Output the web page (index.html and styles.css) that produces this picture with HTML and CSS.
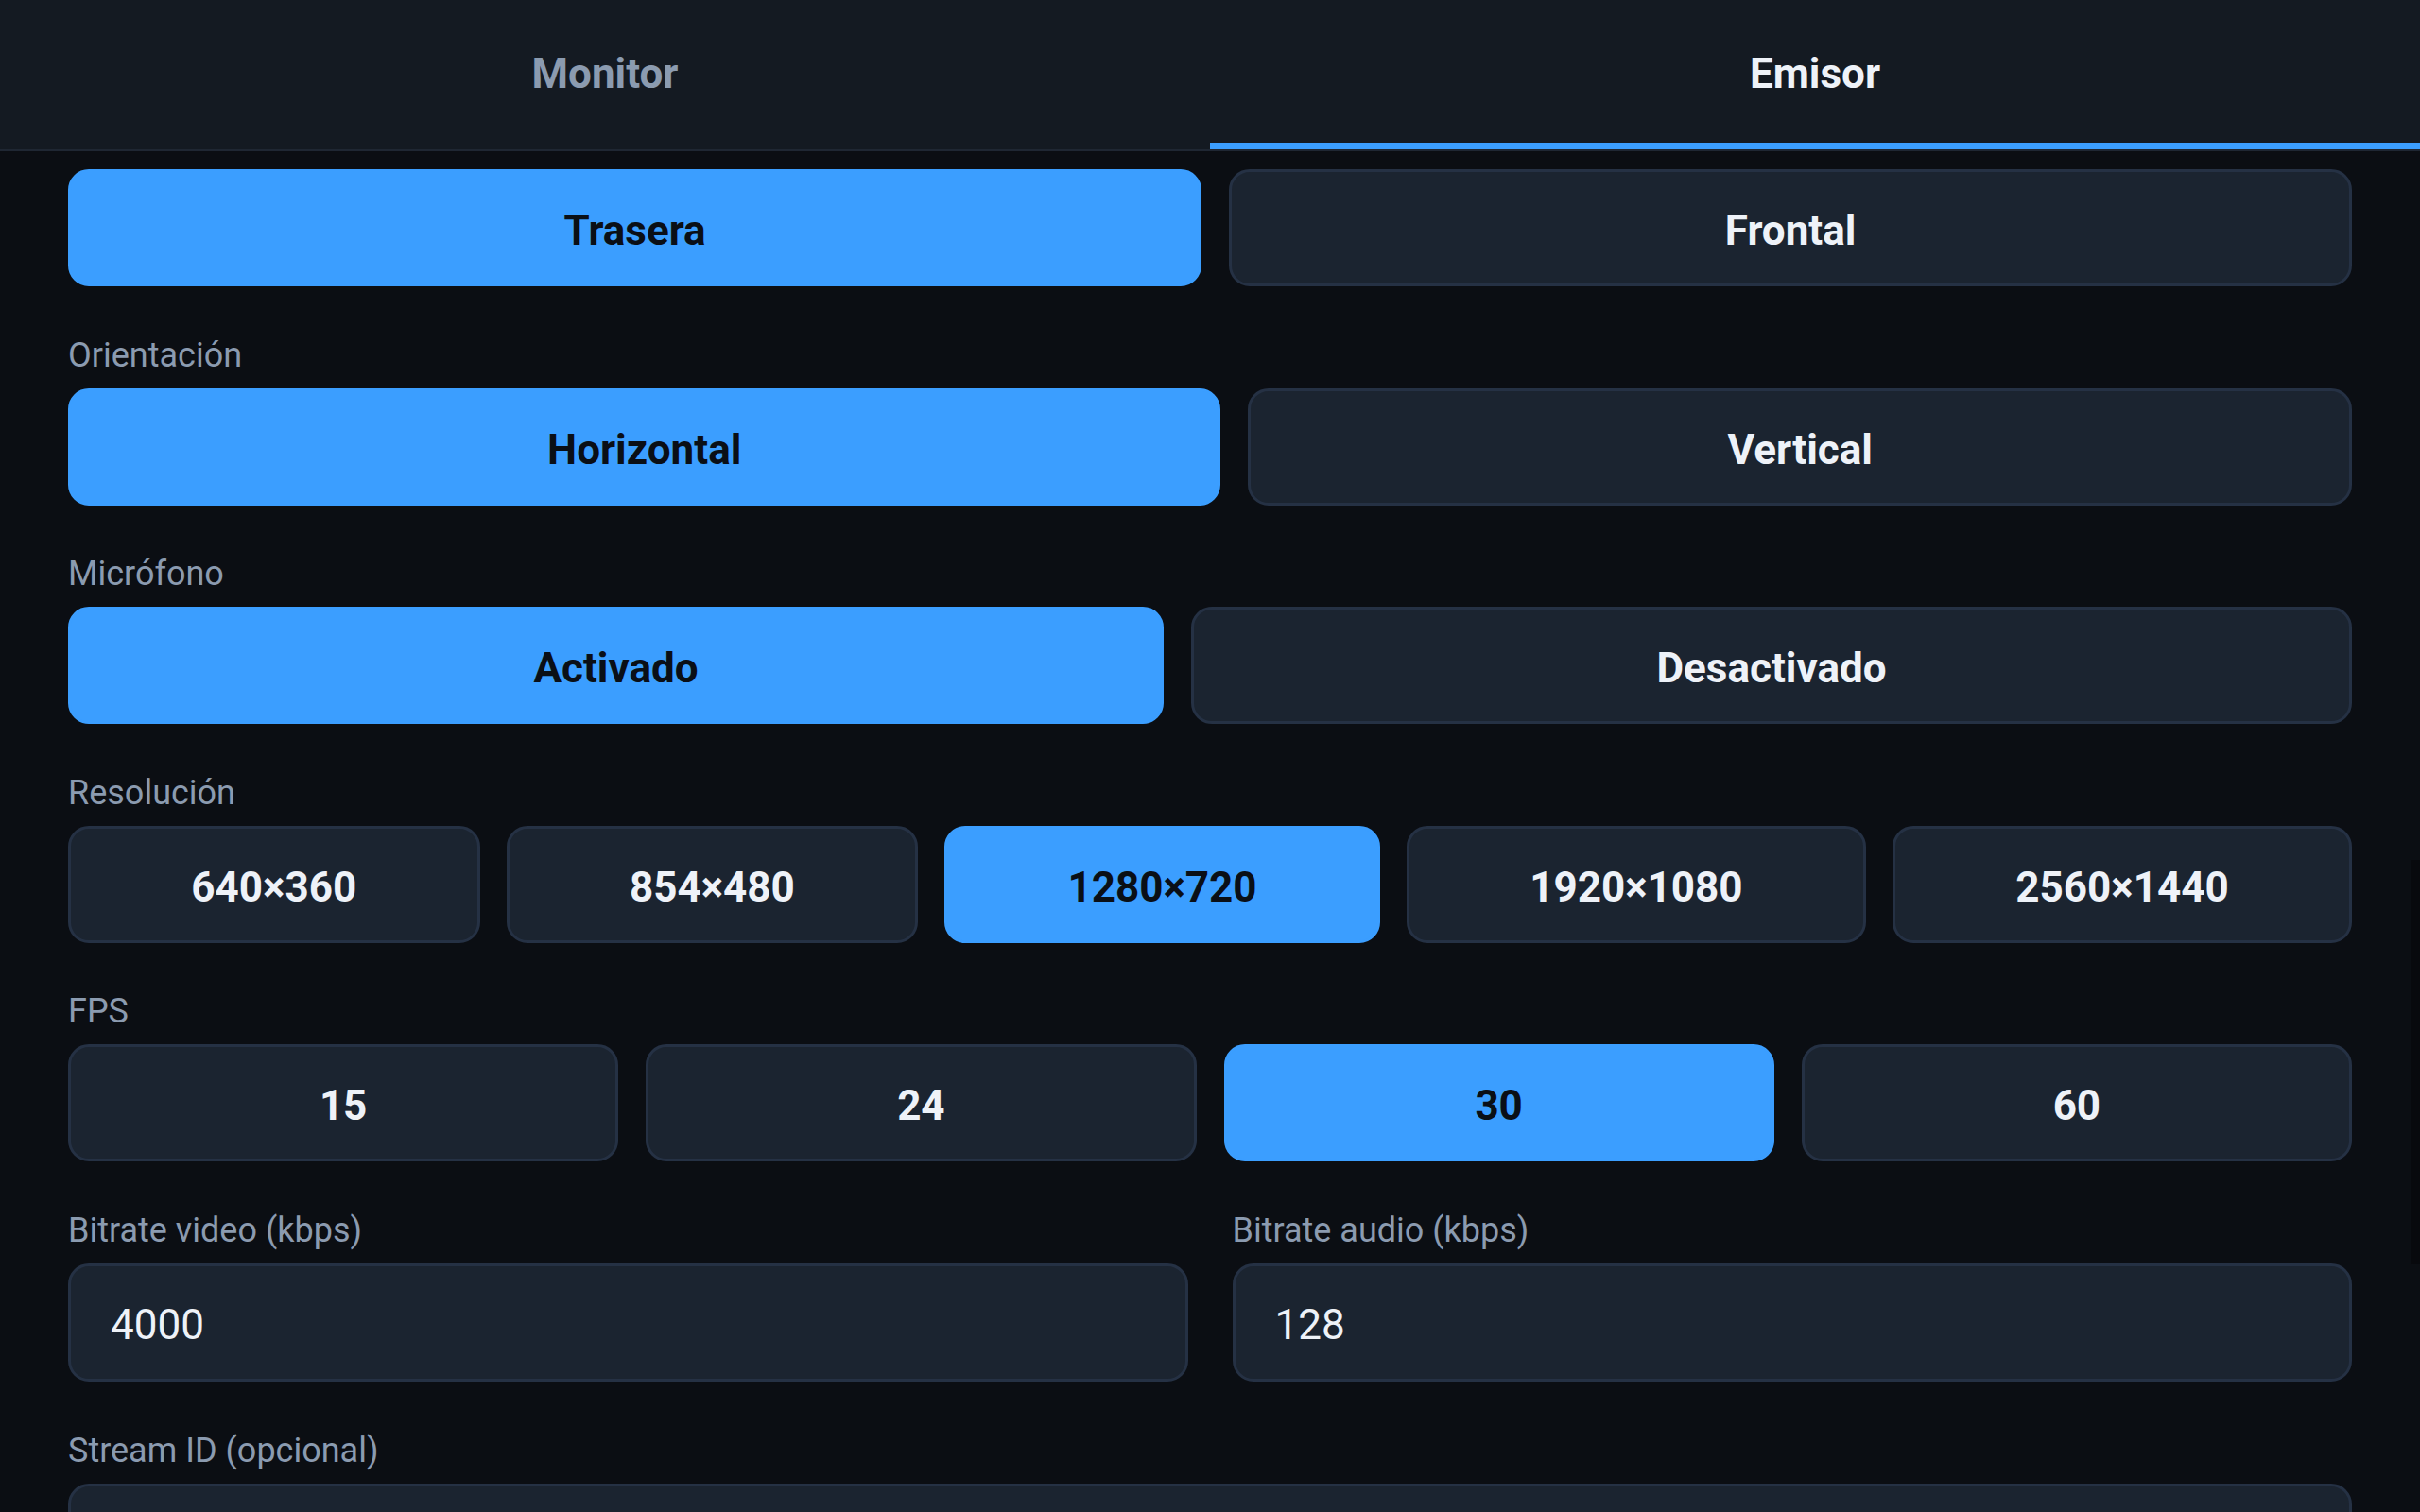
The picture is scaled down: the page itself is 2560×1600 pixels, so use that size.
FILE: index.html
```html
<!DOCTYPE html>
<html lang="es">
<head>
<meta charset="utf-8">
<title>Emisor</title>
<link rel="stylesheet" href="styles.css">
</head>
<body>
<div class="app">
  <nav class="tabs">
    <div class="tab">Monitor</div>
    <div class="tab tab-active">Emisor</div>
  </nav>
  <main class="content">
    <div class="seg">
      <button class="opt opt-on">Trasera</button>
      <button class="opt">Frontal</button>
    </div>

    <section class="field">
      <div class="label">Orientación</div>
      <div class="seg">
        <button class="opt opt-on">Horizontal</button>
        <button class="opt">Vertical</button>
      </div>
    </section>

    <section class="field">
      <div class="label">Micrófono</div>
      <div class="seg">
        <button class="opt opt-on">Activado</button>
        <button class="opt">Desactivado</button>
      </div>
    </section>

    <section class="field">
      <div class="label">Resolución</div>
      <div class="seg seg-tight">
        <button class="opt">640×360</button>
        <button class="opt">854×480</button>
        <button class="opt opt-on">1280×720</button>
        <button class="opt">1920×1080</button>
        <button class="opt">2560×1440</button>
      </div>
    </section>

    <section class="field">
      <div class="label">FPS</div>
      <div class="seg">
        <button class="opt">15</button>
        <button class="opt">24</button>
        <button class="opt opt-on">30</button>
        <button class="opt">60</button>
      </div>
    </section>

    <div class="pair">
      <section class="field">
        <div class="label">Bitrate video (kbps)</div>
        <input class="input" type="text" value="4000">
      </section>
      <section class="field">
        <div class="label">Bitrate audio (kbps)</div>
        <input class="input" type="text" value="128">
      </section>
    </div>

    <section class="field">
      <div class="label">Stream ID (opcional)</div>
      <input class="input" type="text" value="">
    </section>

    <div class="scroll-thumb"></div>
  </main>
</div>
</body>
</html>
```

FILE: styles.css
```css
* {
  box-sizing: border-box;
}

html, body {
  margin: 0;
  padding: 0;
  background: #0b0e13;
}

body {
  font-family: Roboto, "Noto Sans", "Liberation Sans", sans-serif;
  color: #eef2f8;
}

.app {
  width: 2560px;
  height: 1600px;
  display: flex;
  flex-direction: column;
  overflow: hidden;
}

/* top tab bar */
.tabs {
  flex: 0 0 auto;
  display: flex;
  height: 160px;
  background: #141a22;
  border-bottom: 2px solid #1f2733;
}

.tab {
  position: relative;
  flex: 1 1 0;
  display: flex;
  align-items: center;
  justify-content: center;
  padding-bottom: 3px;
  font-size: 44px;
  font-weight: 700;
  color: #8b9bb0;
}

.tab-active {
  color: #eef2f8;
}

.tab-active::after {
  content: "";
  position: absolute;
  left: 0;
  right: 0;
  bottom: 0;
  height: 7px;
  background: #3b9eff;
}

/* scrolling settings panel */
.content {
  position: relative;
  flex: 1 1 auto;
  overflow: hidden;
  padding: 19px 72px 0;
}

.field {
  margin-top: 50.6px;
}

.label {
  font-size: 36px;
  line-height: 41px;
  padding-top: 2px;
  color: #8b9bb0;
  margin-bottom: 14px;
}

.seg {
  display: flex;
  gap: 29px;
}

.seg-tight {
  gap: 28px;
}

.opt {
  flex: 1 1 auto;
  height: 124px;
  padding: 6px 24px 0;
  border: 3px solid #253144;
  border-radius: 22px;
  background: #1b2430;
  color: #eef2f8;
  font-family: inherit;
  font-size: 44px;
  font-weight: 700;
  white-space: nowrap;
}

.opt-on {
  background: #3b9eff;
  border-color: #3b9eff;
  color: #0a0f16;
}

.pair {
  display: grid;
  grid-template-columns: 1fr 1fr;
  column-gap: 47px;
}

.input {
  display: block;
  width: 100%;
  height: 125px;
  padding: 6px 42px 0;
  border: 3px solid #253144;
  border-radius: 22px;
  background: #1b2430;
  color: #eef2f8;
  font-family: inherit;
  font-size: 44px;
  font-weight: 400;
  outline: none;
}

.scroll-thumb {
  position: absolute;
  right: 0;
  top: 750px;
  width: 9px;
  height: 428px;
  background: #08090d;
}
```
